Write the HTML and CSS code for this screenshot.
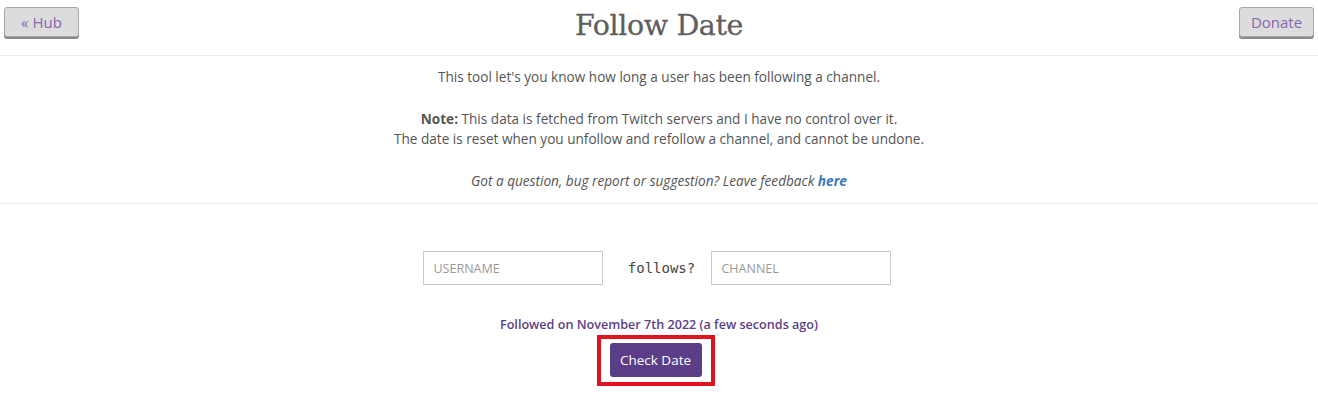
FILE: index.html
```html
<!DOCTYPE html>
<html lang="en">
<head>
    <meta charset="UTF-8">
    <title>Follow Date</title>
    <link rel="stylesheet" href="styles.css">
</head>
<body>
    <div class="header">
        <a class="nav-btn" href="#">&laquo; Hub</a>
        <h1>Follow Date</h1>
        <a class="nav-btn" href="#">Donate</a>
    </div>

    <div class="info">
        <p>This tool let's you know how long a user has been following a channel.</p>
        <p><b>Note:</b> This data is fetched from Twitch servers and I have no control over it.<br>
        The date is reset when you unfollow and refollow a channel, and cannot be undone.</p>
        <p class="feedback">Got a question, bug report or suggestion? Leave feedback <a href="#">here</a></p>
    </div>

    <form class="lookup">
        <div class="fields">
            <input type="text" placeholder="USERNAME">
            <span class="follows">follows?</span>
            <input type="text" placeholder="CHANNEL">
        </div>
        <div class="result">Followed on November 7th 2022 (a few seconds ago)</div>
        <div class="highlight">
            <button type="submit" class="check-btn">Check Date</button>
        </div>
    </form>
</body>
</html>
```

FILE: styles.css
```css
* {
    margin: 0;
    padding: 0;
    box-sizing: border-box;
}

body {
    font-family: 'Open Sans', 'Noto Sans', sans-serif;
    font-size: 13.6px;
    color: #555;
    background: white;
}

.header {
    display: flex;
    justify-content: space-between;
    align-items: flex-start;
    height: 56px;
    padding: 7px 4px 0;
    border-bottom: 1px solid #ebebeb;
}

.header h1 {
    font-family: 'DejaVu Serif', serif;
    font-weight: normal;
    font-size: 28.5px;
    color: #5e5e5e;
    margin-top: 2px;
    letter-spacing: -0.4px;
    -webkit-text-stroke: 0.3px #5e5e5e;
}

.nav-btn {
    display: block;
    width: 75px;
    height: 30px;
    line-height: 28px;
    text-align: center;
    background: #dcdcdc;
    border: 1px solid #a8a8a8;
    border-radius: 3px;
    box-shadow: 0 2px 0 #8a8a8a;
    color: #8467b0;
    font-size: 15px;
    text-decoration: none;
}

.info {
    text-align: center;
    padding: 11px 0 12px;
    border-bottom: 1px solid #ebebeb;
    line-height: 20px;
}

.info p {
    margin-bottom: 22px;
}

.info p.feedback {
    margin-bottom: 0;
    font-style: italic;
}

.info b {
    font-weight: 700;
}

.feedback a {
    color: #3b78c2;
    font-weight: 700;
    text-decoration: none;
}

.lookup {
    display: flex;
    flex-direction: column;
    align-items: center;
    padding-top: 47px;
}

.fields {
    display: flex;
    align-items: center;
    margin-left: -5px;
}

.fields input {
    width: 180px;
    height: 34px;
    border: 1px solid #c8c8c8;
    padding: 0 10px;
    font-family: 'Open Sans', 'Noto Sans', sans-serif;
    font-size: 12.5px;
    color: #555;
}

.fields input::placeholder {
    color: #999;
}

.follows {
    font-family: 'DejaVu Sans Mono', monospace;
    font-size: 14px;
    color: #444;
    width: 108px;
    padding-left: 10px;
    text-align: center;
}

.result {
    margin-top: 31px;
    color: #5b3f86;
    font-size: 12.6px;
    font-weight: 600;
}

.highlight {
    margin-top: 2px;
    margin-right: 7px;
    border: 4px solid #e0141e;
    padding: 4px 9px 5px;
}

.check-btn {
    display: block;
    width: 92px;
    height: 34px;
    background: #5c3d87;
    color: white;
    border: none;
    border-radius: 3px;
    font-family: 'Open Sans', 'Noto Sans', sans-serif;
    font-size: 13.5px;
    cursor: pointer;
}
```
